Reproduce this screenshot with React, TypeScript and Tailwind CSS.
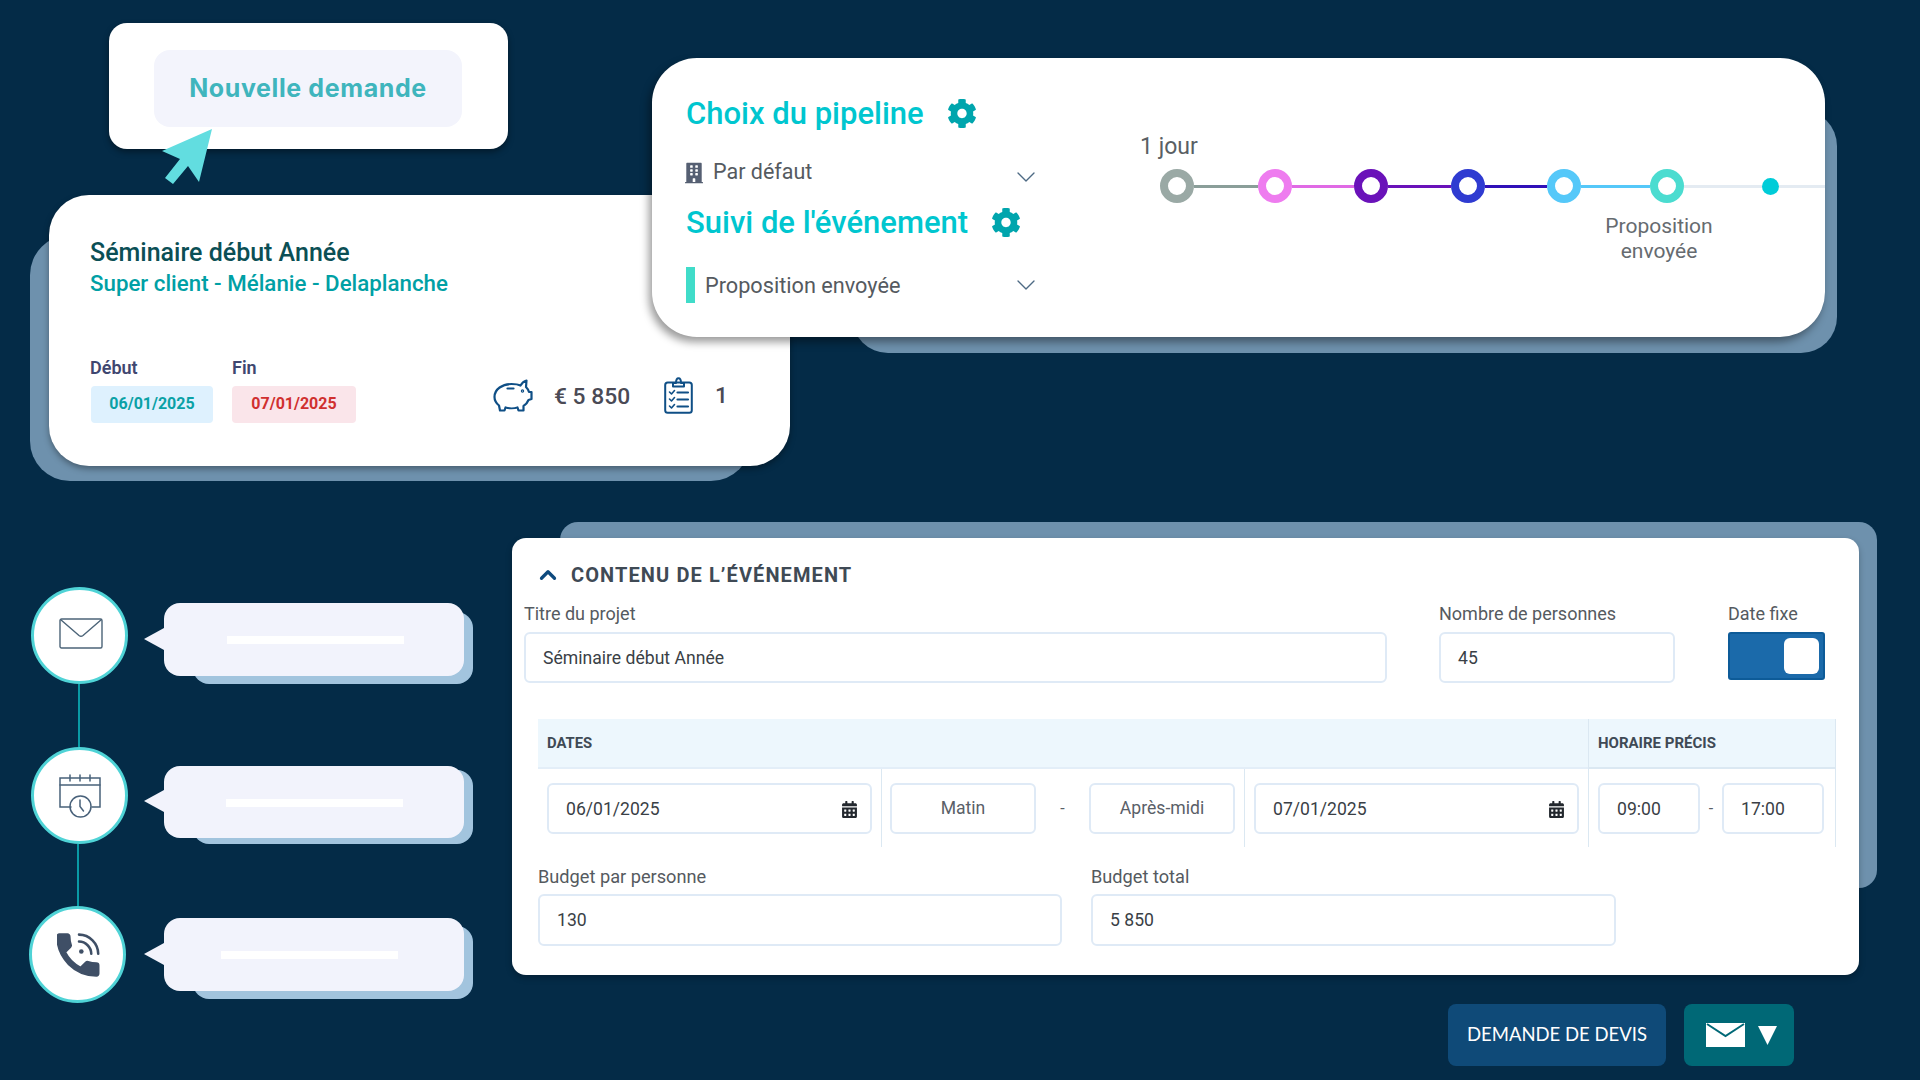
import { ChevronDown, ChevronUp } from "lucide-react"
import { FaBuilding, FaCalendarAlt, FaCog } from "react-icons/fa"

const stages = [
    { ring: "border-[#9aa9a5]", line: "bg-[#8a9e99]", width: "w-[64px]" },
    { ring: "border-[#ee7cef]", line: "bg-[#e06ae5]", width: "w-[62px]" },
    { ring: "border-[#6a12b9]", line: "bg-[#6a12b9]", width: "w-[63px]" },
    { ring: "border-[#2f3bd1]", line: "bg-[#3010b8]", width: "w-[62px]" },
    { ring: "border-[#55c8f9]", line: "bg-[#55c8f9]", width: "w-[69px]" },
    { ring: "border-[#4bdcd0]", line: "bg-[#e4ebf2]", width: "w-[78px]" },
]

function PiggyIcon() {
    return (
        <svg viewBox="1 0 39 33" className="h-[33px] w-[40px]" fill="none" stroke="#0f4f86" strokeWidth="2.2" strokeLinejoin="round" strokeLinecap="round">
            <path d="M2 18C2 10 10 5 19 5C23 5 26 5.5 28 6.5C29.5 4 32 2 34 1.5L33.5 8C35 9.5 36 11 36.5 13L39 13L39 20L36 21C35 23.5 33.5 25.5 31 27L31 31.5L26 31.5L25 28.5C22 29.5 16 29.5 13 28.5L12 31.5L7.5 31.5L6.5 26.5C3.5 24 2 21 2 18Z" />
            <path d="M15 9.5H21" />
            <circle cx="30" cy="12" r="0.6" />
        </svg>
    )
}

function ChecklistIcon() {
    return (
        <svg viewBox="0 0 29 37" className="h-[37px] w-[29px]" fill="none" stroke="#0f4f86" strokeWidth="2" strokeLinejoin="round" strokeLinecap="round">
            <rect x="1.2" y="5.5" width="26.6" height="30.3" rx="2.5" />
            <path d="M9 9.5V6H12C12 3 13 1.2 14.5 1.2C16 1.2 17 3 17 6H20V9.5Z" />
            <path d="M5.5 15L7.5 17L10.5 13.5M5.5 22L7.5 24L10.5 20.5M5.5 29L7.5 31L10.5 27.5" strokeWidth="1.6" />
            <path d="M13.5 15.5H24M13.5 22.5H24M13.5 29.5H24" strokeWidth="2.2" />
        </svg>
    )
}

function MailIcon() {
    return (
        <svg viewBox="0 0 44 31" className="h-[31px] w-[44px]" fill="none" stroke="#4c6478" strokeWidth="1.4" strokeLinejoin="round">
            <rect x="1" y="1" width="42" height="29" rx="1.5" />
            <path d="M1.5 1.5L20 17.5C21.5 18.6 22.5 18.6 24 17.5L42.5 1.5" />
        </svg>
    )
}

function CalendarClockIcon() {
    return (
        <svg viewBox="0 0 42 44" className="h-[44px] w-[42px]" fill="none" stroke="#48617a" strokeWidth="1.5" strokeLinecap="round">
            <path d="M12 33H1V4H41V33H33" />
            <path d="M1 11H41" />
            <path d="M11 1V7M21 1V7M31 1V7" />
            <circle cx="21.5" cy="32.5" r="10.5" />
            <path d="M21 26V32.5L24.5 37" />
        </svg>
    )
}

function PhoneIcon() {
    return (
        <svg viewBox="3 2.5 19 19" className="ml-[3px] h-[44px] w-[44px]" fill="none">
            <path fill="#3f4f66" stroke="#3f4f66" strokeWidth="0.7" strokeLinejoin="round" d="M20 15.5c-1.25 0-2.45-.2-3.57-.57a1.02 1.02 0 0 0-1.02.24l-2.2 2.2a15.045 15.045 0 0 1-6.59-6.59l2.2-2.21a.96.96 0 0 0 .25-1A11.36 11.36 0 0 1 8.5 4c0-.55-.45-1-1-1H4c-.55 0-1 .45-1 1 0 9.39 7.61 17 17 17 .55 0 1-.45 1-1v-3.5c0-.55-.45-1-1-1z" />
            <path stroke="#3f4f66" strokeWidth="1.1" strokeLinecap="round" d="M12.5 3.2A8.4 8.4 0 0 1 20.8 11.5M12.5 6.2A5.4 5.4 0 0 1 17.8 11.5" />
            <circle cx="13.5" cy="10.5" r="1" fill="#3f4f66" />
        </svg>
    )
}

function Bubble({ top, height, back, tail, bar }: { top: string; height: string; back: string; tail: string; bar: string }) {
    return (
        <div className={`relative w-[300px] ${top} ${height}`}>
            <div className={`absolute left-[29px] -right-[9px] rounded-2xl bg-[#a2c4de] ${back}`} />
            <div className={`absolute -left-[20px] h-0 w-0 border-y-[11px] border-r-[20px] border-y-transparent border-r-[#f2f3fc] ${tail}`} />
            <div className="relative h-full rounded-2xl bg-[#f2f3fc]">
                <div className={`absolute top-[33px] h-2 w-[177px] bg-white ${bar}`} />
            </div>
        </div>
    )
}

function Circle({ children }: { children: React.ReactNode }) {
    return (
        <div className="flex h-[97px] w-[97px] shrink-0 items-center justify-center rounded-full border-[3px] border-[#4fd3d6] bg-white">
            {children}
        </div>
    )
}

function Field({ children, className }: { children: React.ReactNode; className: string }) {
    return (
        <div className={`flex items-center rounded-md border-2 border-[#dfeaf6] bg-white text-[17.6px] text-[#3a3f46] ${className}`}>
            {children}
        </div>
    )
}

function DateField({ value, className }: { value: string; className: string }) {
    return (
        <Field className={`h-[51px] justify-between pl-[17px] pr-[13px] pt-[1px] ${className}`}>
            <span>{value}</span>
            <FaCalendarAlt className="h-[17px] w-[15px] text-[#23282e]" />
        </Field>
    )
}

export default function App() {
    return (
        <div className="relative h-[1080px] w-[1920px] overflow-hidden bg-[#042b47] font-['Roboto',sans-serif]">

            {/* nouvelle demande */}
            <div className="absolute left-[109px] top-[23px] h-[126px] w-[399px] rounded-[18px] bg-white px-[45px] pt-[27px] shadow-[0_3px_6px_rgba(0,0,0,0.4)]">
                <div className="flex h-[77px] w-[308px] items-center justify-center rounded-2xl bg-[#f3f4fc] font-['Inter',sans-serif] text-[25px] font-bold tracking-[0.6px] text-[#3fb5bd]">
                    Nouvelle demande
                </div>
            </div>
            <svg className="absolute left-[160px] top-[127px] z-10 h-[60px] w-[54px]" viewBox="0 0 54 60">
                <path fill="#62dde0" d="M52 2L2 24L20 32L5 51L13 57L28 39L39 55Z" />
            </svg>

            {/* carte événement */}
            <div className="absolute left-[30px] top-[235px] h-[246px] w-[721px] rounded-[40px] bg-[#6e91ad]" />
            <div className="absolute left-[49px] top-[195px] h-[271px] w-[741px] rounded-[40px] bg-white pl-[41px] pt-[43px] shadow-[0_3px_6px_rgba(0,0,0,0.35)]">
                <div className="text-[25px] font-medium leading-[30px] text-[#0b4f55]">Séminaire début Année</div>
                <div className="mt-[1px] text-[22.3px] font-medium leading-[28px] text-[#00a0a5]">Super client - Mélanie - Delaplanche</div>
                <div className="mt-[60px] flex">
                    <div className="flex gap-[19px]">
                        <div className="w-[123px]">
                            <div className="text-[18px] font-semibold leading-[22px] text-[#3f4770]">Début</div>
                            <div className="ml-[1px] mt-[7px] flex h-[37px] items-center justify-center rounded bg-[#def1fe] pb-[1px] text-[16px] font-bold text-[#0aa1a6]">06/01/2025</div>
                        </div>
                        <div className="w-[124px]">
                            <div className="text-[18px] font-semibold leading-[22px] text-[#3f4770]">Fin</div>
                            <div className="mt-[7px] flex h-[37px] items-center justify-center rounded bg-[#fae5ea] pb-[1px] text-[16px] font-bold text-[#d0302f]">07/01/2025</div>
                        </div>
                    </div>
                    <div className="ml-[137px] mt-[20px] flex h-[37px] items-center text-[22.8px] font-medium text-[#4a4a55]">
                        <PiggyIcon />
                        <span className="ml-[21px] mt-[3px] w-[73px] whitespace-nowrap">€ 5 850</span>
                        <span className="ml-[37px]"><ChecklistIcon /></span>
                        <span className="ml-[22px] mt-[2px]">1</span>
                    </div>
                </div>
            </div>

            {/* pipeline */}
            <div className="absolute left-[852px] top-[110px] h-[243px] w-[985px] rounded-[36px] bg-[#6e91ad]" />
            <div className="absolute left-[652px] top-[58px] flex h-[279px] w-[1173px] overflow-hidden rounded-[45px] bg-white shadow-[-3px_5px_8px_rgba(0,0,0,0.4)]">
                <div className="w-[488px] shrink-0 pl-[34px] pt-[38px]">
                    <div className="flex h-9 items-center gap-[23px]">
                        <span className="text-[31px] font-medium text-[#00c6cf]">Choix du pipeline</span>
                        <FaCog className="-mt-[2px] h-[31px] w-[30px] text-[#00a5ad]" />
                    </div>
                    <div className="mt-[25px] flex h-[30px] w-[356px] items-center text-[21.5px] text-[#555a60]">
                        <FaBuilding className="ml-[-1px] mt-[2px] h-[22px] w-[18px] text-[#555f72]" />
                        <span className="ml-[10px]">Par défaut</span>
                        <ChevronDown className="-my-1 ml-auto mt-[5px] h-[32px] w-[32px] text-[#4e6a84]" strokeWidth={1} />
                    </div>
                    <div className="mt-[18px] flex h-9 items-center gap-[23px]">
                        <span className="text-[31px] font-medium text-[#00c6cf]">Suivi de l'événement</span>
                        <FaCog className="-mt-[2px] h-[31px] w-[30px] text-[#00a5ad]" />
                    </div>
                    <div className="mt-[26px] flex h-[36px] w-[356px] items-center text-[21.7px] text-[#555a60]">
                        <div className="h-[36px] w-[9px] bg-[#40dcc9]" />
                        <span className="ml-[10px] mt-[3px]">Proposition envoyée</span>
                        <ChevronDown className="-my-1 ml-auto -mt-[5px] h-[32px] w-[32px] text-[#4e6a84]" strokeWidth={1} />
                    </div>
                </div>
                <div className="flex-1 pt-[76px]">
                    <div className="h-[26px] text-[23px] leading-[26px] text-[#5a5f64]">1 jour</div>
                    <div className="ml-[20px] mt-[9px] flex h-[34px] items-center">
                        {stages.map((stage) => (
                            <div key={stage.ring} className="flex items-center">
                                <div className={`h-[34px] w-[34px] rounded-full border-[8px] bg-white ${stage.ring}`} />
                                <div className={`h-[3px] ${stage.line} ${stage.width}`} />
                            </div>
                        ))}
                        <div className="h-[17px] w-[17px] shrink-0 rounded-full bg-[#00ccd8]" />
                        <div className="h-[3px] flex-1 bg-[#e4ebf2]" />
                    </div>
                    <div className="ml-[459px] mt-[11px] w-[120px] text-center text-[21px] leading-[24.5px] text-[#666b70]">
                        Proposition
                        <br />
                        envoyée
                    </div>
                </div>
            </div>

            {/* étapes de relance */}
            <div className="absolute left-[29px] top-[587px] flex flex-col">
                <div className="ml-[2px] flex gap-[36px]">
                    <Circle><span className="mb-[4px] ml-[3px]"><MailIcon /></span></Circle>
                    <Bubble top="mt-[16px]" height="h-[73px]" back="top-[9px] -bottom-[8px]" tail="top-[25px]" bar="left-[63px]" />
                </div>
                <div className="ml-[49px] h-[63px] w-[2px] bg-[#0a9aa5]" />
                <div className="ml-[2px] flex gap-[36px]">
                    <Circle><CalendarClockIcon /></Circle>
                    <Bubble top="mt-[19px]" height="h-[72px]" back="top-[4px] -bottom-[6px]" tail="top-[24px]" bar="left-[62px]" />
                </div>
                <div className="ml-[48px] h-[62px] w-[2px] bg-[#0a9aa5]" />
                <div className="flex gap-[38px]">
                    <Circle><PhoneIcon /></Circle>
                    <Bubble top="mt-[12px]" height="h-[73px]" back="top-[8px] -bottom-[8px]" tail="top-[25px]" bar="left-[57px]" />
                </div>
            </div>

            {/* contenu de l'événement */}
            <div className="absolute left-[560px] top-[522px] h-[366px] w-[1317px] rounded-[18px] bg-[#6e91ad]" />
            <div className="absolute left-[512px] top-[538px] h-[437px] w-[1347px] rounded-[14px] bg-white pt-[23px] shadow-[0_3px_6px_rgba(0,0,0,0.25)]">
                <div className="flex h-7 items-center pl-[23px]">
                    <ChevronUp className="h-[26px] w-[26px] text-[#0e4a7e]" strokeWidth={3} />
                    <span className="ml-[10px] text-[20px] font-bold tracking-[1.1px] text-[#3f4a55]">CONTENU DE L’ÉVÉNEMENT</span>
                </div>
                <div className="mt-[15px] flex pl-[12px] text-[18px] leading-[20px] text-[#555a60]">
                    <div className="w-[863px]">
                        <div>Titre du projet</div>
                        <Field className="mt-[8px] h-[51px] pl-[17px]">Séminaire début Année</Field>
                    </div>
                    <div className="ml-[52px] w-[236px]">
                        <div>Nombre de personnes</div>
                        <Field className="mt-[8px] h-[51px] pl-[17px]">45</Field>
                    </div>
                    <div className="ml-[53px] w-[97px]">
                        <div>Date fixe</div>
                        <div className="mt-[8px] flex h-[48px] items-center justify-end rounded-[3px] border-2 border-[#0d5b98] bg-[#1b6aaa] pr-[4px]">
                            <div className="h-[36px] w-[35px] rounded-[6px] bg-white" />
                        </div>
                    </div>
                </div>

                <div className="ml-[26px] mt-[36px] grid w-[1298px] grid-cols-[343px_364px_343px_248px]">
                    <div className="col-span-3 flex h-[50px] items-center border-b-2 border-[#e3eef8] bg-[#edf7fd] pl-[9px] text-[14.8px] font-bold text-[#3f4a55]">DATES</div>
                    <div className="flex h-[50px] items-center border-x border-b-2 border-[#dbe8f2] bg-[#edf7fd] pl-[9px] text-[15px] font-bold text-[#3f4a55]">HORAIRE PRÉCIS</div>

                    <div className="flex h-[78px] items-start pl-[9px] pt-[14px]">
                        <DateField value="06/01/2025" className="w-[325px]" />
                    </div>
                    <div className="flex h-[78px] items-start border-x border-[#dbe8f2] pl-[8px] pt-[14px]">
                        <Field className="h-[51px] w-[146px] justify-center text-[#5a6068]">Matin</Field>
                        <span className="w-[53px] text-center leading-[51px] text-[#5a6068]">-</span>
                        <Field className="h-[51px] w-[146px] justify-center text-[#5a6068]">Après-midi</Field>
                    </div>
                    <div className="flex h-[78px] items-start pl-[9px] pt-[14px]">
                        <DateField value="07/01/2025" className="w-[325px]" />
                    </div>
                    <div className="flex h-[78px] items-start border-x border-[#dbe8f2] pl-[9px] pt-[14px]">
                        <Field className="h-[51px] w-[102px] pl-[17px] pt-[1px]">09:00</Field>
                        <span className="w-[22px] text-center leading-[51px] text-[#5a6068]">-</span>
                        <Field className="h-[51px] w-[102px] pl-[17px] pt-[1px]">17:00</Field>
                    </div>
                </div>

                <div className="ml-[26px] mt-[20px] flex gap-[29px] text-[18.2px] leading-[20px] text-[#555a60]">
                    <div className="w-[524px]">
                        <div>Budget par personne</div>
                        <Field className="mt-[7px] h-[52px] pl-[17px]">130</Field>
                    </div>
                    <div className="w-[525px]">
                        <div>Budget total</div>
                        <Field className="mt-[7px] h-[52px] pl-[17px]">5 850</Field>
                    </div>
                </div>
            </div>

            {/* boutons */}
            <div className="absolute left-[1448px] top-[1004px] flex gap-[18px]">
                <div className="flex h-[62px] w-[218px] items-center justify-center rounded-lg bg-[#0f4a78] font-['Lato',sans-serif] text-[18.5px] text-white">
                    DEMANDE DE DEVIS
                </div>
                <div className="flex h-[62px] w-[110px] items-center rounded-lg bg-[#006876] pl-[22px]">
                    <svg viewBox="0 0 39 24" className="h-[24px] w-[39px]">
                        <rect width="39" height="24" fill="white" />
                        <path d="M1 1L19.5 13L38 1" fill="none" stroke="#006876" strokeWidth="2" />
                    </svg>
                    <svg viewBox="0 0 19 19" className="ml-[13px] h-[19px] w-[19px]">
                        <path d="M0 0H19L9.5 19Z" fill="white" />
                    </svg>
                </div>
            </div>
        </div>
    )
}
